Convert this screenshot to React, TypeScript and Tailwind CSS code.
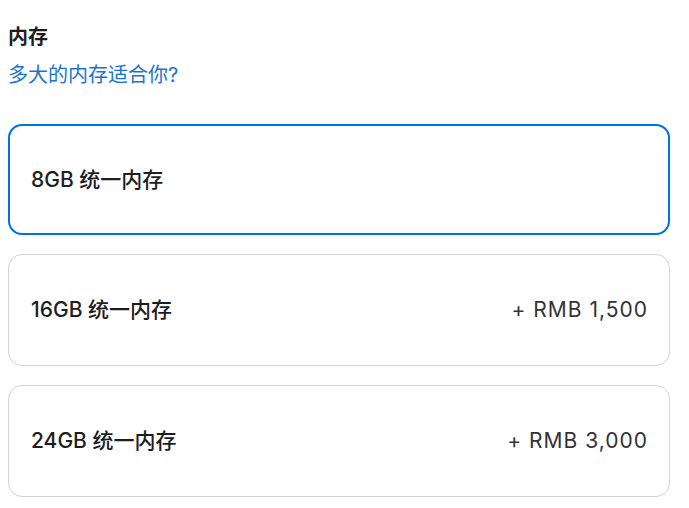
const options = [
  { size: "8GB", price: "" },
  { size: "16GB", price: "+ RMB 1,500" },
  { size: "24GB", price: "+ RMB 3,000" },
];

export default function App() {
  const selected = 0;
  return (
    <div
      className="min-h-screen bg-white pl-[8px] pr-[19px] pt-[24px] text-[#1d1d1f]"
      style={{ fontFamily: '"Inter", "Noto Sans CJK SC", sans-serif' }}
    >
      <h2 className="text-[20px] font-semibold leading-[26px]">内存</h2>
      <a className="mt-[12px] block text-[20px] leading-[26px] text-[#1a73d0]">
        多大的内存适合你?
      </a>
      <div className="mt-[36px] flex flex-col gap-[19px]">
        {options.map((opt, i) => (
          <div
            key={opt.size}
            className={
              i === selected
                ? "flex h-[111px] items-center justify-between rounded-[14px] border-2 border-[#0071e3] pl-[21px] pr-[20px]"
                : "flex h-[112px] items-center justify-between rounded-[14px] border border-[#d2d2d7] pl-[22px] pr-[21px]"
            }
          >
            <span className="text-[21px] font-medium">
              {opt.size} 统一内存
            </span>
            <span className="text-[21px] tracking-[1px] text-[#333336]">
              {opt.price}
            </span>
          </div>
        ))}
      </div>
    </div>
  );
}
